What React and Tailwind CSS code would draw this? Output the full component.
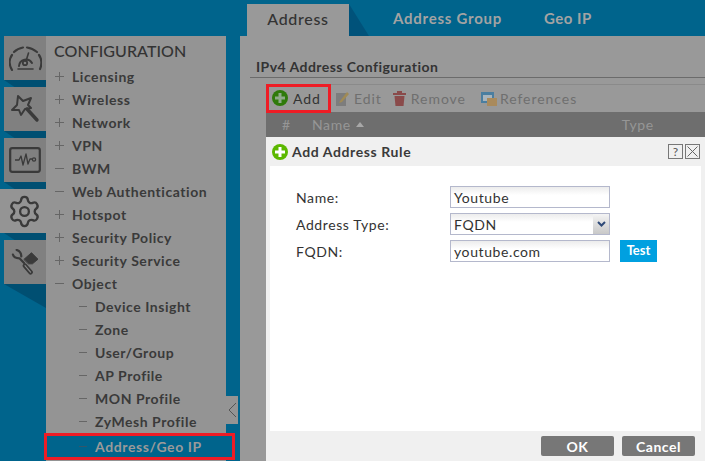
import { Settings } from "lucide-react";

const font = "font-['Lato','Liberation_Sans',sans-serif]";

const menu = [
  ["+", "Licensing"],
  ["+", "Wireless"],
  ["+", "Network"],
  ["+", "VPN"],
  ["-", "BWM"],
  ["-", "Web Authentication"],
  ["+", "Hotspot"],
  ["+", "Security Policy"],
  ["+", "Security Service"],
  ["-", "Object"],
];

const subMenu = ["Device Insight", "Zone", "User/Group", "AP Profile", "MON Profile", "ZyMesh Profile"];

function Gauge() {
  return (
    <svg width="33" height="25" viewBox="0 0 33 25" fill="none" stroke="#3a3a3a" strokeWidth="2.2" strokeLinecap="round">
      <path d="M3 24 C0 19 0 13 3 9" />
      <path d="M5 6 C8 3 11 2 14 1.5" />
      <path d="M18 1.5 C22 2 25 3.500 28 6" />
      <path d="M30 9 C33 13 33 19 31 23" />
      <path d="M10 20 A7 7 0 0 1 23 17" strokeWidth="2" />
      <circle cx="16" cy="17" r="2.2" strokeWidth="1.8" />
      <path d="M17 15 L19.500 7" strokeWidth="1.6" />
      <path d="M9 23 h15" strokeWidth="1.6" />
    </svg>
  );
}

function Wand() {
  return (
    <svg width="30" height="30" viewBox="0 0 30 30" fill="none" stroke="#3a3a3a" strokeLinejoin="round" strokeLinecap="round">
      <path d="M8 2 L13 7 L21 4 L18 11 L21 14 L15 15 L11 21 L9 16 L2 16 L7 11 Z" strokeWidth="2" />
      <path d="M17 15 L27 26" strokeWidth="3.4" />
    </svg>
  );
}

function Monitor() {
  return (
    <svg width="32" height="26" viewBox="0 0 32 26" fill="none" stroke="#3a3a3a" strokeLinejoin="round">
      <rect x="1.2" y="1.2" width="29.6" height="23.6" rx="2" strokeWidth="2.2" />
      <path d="M6 13 H10 L12 9 L14 18 L17 7 L19 17 L21 12 H23" strokeWidth="1.3" />
      <circle cx="25" cy="12.5" r="1.6" strokeWidth="1.3" />
    </svg>
  );
}

function Tools() {
  return (
    <svg width="28" height="26" viewBox="0 0 30 28" fill="none" stroke="#3a3a3a" strokeLinecap="round" strokeLinejoin="round">
      <path d="M2 6 C3 10 6 10 9 10 L14 15" strokeWidth="2.4" />
      <path d="M6 1 C9 2 11 4 11 8" strokeWidth="2.4" />
      <path d="M14 11 L22 4 L29 11 L23 16 L19 16 Z" fill="#3a3a3a" strokeWidth="1" />
      <path d="M15 18 L21 25" strokeWidth="5" />
      <path d="M15 18 L21 25" strokeWidth="1.2" stroke="#8a8a8a" />
    </svg>
  );
}

function PlusIcon({ fill, plus }) {
  return (
    <svg width="16" height="16" viewBox="0 0 16 16" className="shrink-0">
      <circle cx="8" cy="8" r="8" fill={fill} />
      <path d="M8 3 V13 M3 8 H13" stroke={plus} strokeWidth="3" />
    </svg>
  );
}

function RailItem({ children, tall }) {
  return (
    <div className="flex flex-col">
      <div className="ml-1 flex h-11 w-[42px] items-center justify-center bg-[#808080]">{children}</div>
      {tall ? (
        <div className="ml-1 h-6 w-[42px] bg-[#004f72] [clip-path:polygon(0_0,100%_0,100%_100%)]"></div>
      ) : (
        <div className="ml-1 h-[7px] w-[42px] bg-[#004f72] [clip-path:polygon(0_0,100%_0,100%_100%,25%_100%)]"></div>
      )}
    </div>
  );
}

function ToolbarButton({ icon, label, className }) {
  return (
    <div className={`flex items-center text-[14px] tracking-[0.95px] text-[#6f6f6f] ${className}`}>
      {icon}
      <span>{label}</span>
    </div>
  );
}

function Field({ label, children }) {
  return (
    <div className="flex h-[22px] items-center">
      <div className="w-[154px] text-[14px] tracking-[0.6px] text-[#333]">{label}</div>
      {children}
    </div>
  );
}

function TextBox({ value }) {
  return (
    <div className="flex h-[22px] w-[160px] items-center border border-[#b4b8cc] bg-gradient-to-b from-[#ececec] to-white to-40% px-[3px] text-[14px] tracking-[0.6px] text-[#333]">
      {value}
    </div>
  );
}

export default function App() {
  return (
    <div className={`relative flex h-[461px] w-[705px] overflow-hidden bg-[#00648c] ${font}`}>
      {/* left icon rail */}
      <div className="flex w-[46px] flex-col pt-9">
        <RailItem><Gauge /></RailItem>
        <RailItem><Wand /></RailItem>
        <RailItem><Monitor /></RailItem>
        <div className="flex h-[44px] w-[46px] items-center justify-center bg-[#949494] pl-[3px]">
          <Settings size={35} color="#3a3a3a" strokeWidth={1.6} />
        </div>
        <div className="ml-1 h-[7px] w-[42px] bg-[#004f72] [clip-path:polygon(0_0,100%_0,100%_100%,25%_100%)]"></div>
        <RailItem tall><Tools /></RailItem>
      </div>

      {/* menu */}
      <div className="mt-9 h-[425px] w-[180px] bg-[#949494]">
        <div className="flex h-[29px] items-center pl-2 pt-[1px] text-[16px] font-medium tracking-[0.05px] text-[#333]">CONFIGURATION</div>
        {menu.map(([sign, label]) => (
          <div key={label} className="flex h-[23px] items-center pl-[9px] text-[14px] font-bold tracking-[0.55px] text-[#3a3a3a]">
            <span className="relative mr-[8px] h-[9px] w-[9px]">
              <span className="absolute left-0 top-1 h-px w-[9px] bg-[#666]"></span>
              {sign === "+" && <span className="absolute left-1 top-0 h-[9px] w-px bg-[#666]"></span>}
            </span>
            {label}
          </div>
        ))}
        {subMenu.map((label) => (
          <div key={label} className="flex h-[23px] items-center pl-[33px] text-[14px] font-bold tracking-[0.55px] text-[#3a3a3a]">
            <span className="mr-[8px] h-px w-[8px] bg-[#666]"></span>
            {label}
          </div>
        ))}
        <div className="-ml-[2px] flex h-[27px] w-[191px] items-center border-[3px] border-[#ee1c25] bg-[#00648c] pl-[32px] text-[14px] font-bold tracking-[0.6px] text-[#9a9a9a]">
          <span className="mr-[8px] h-px w-[8px] bg-[#33566a]"></span>
          Address/Geo IP
        </div>
      </div>

      {/* collapse handle */}
      <div className="w-[14px]">
        <div className="mt-[396px] flex h-7 w-3 items-center justify-center bg-[#949494]">
          <svg width="9" height="16" viewBox="0 0 9 16" fill="none" stroke="#555" strokeWidth="1">
            <path d="M8 1 L1 8 L8 15" />
          </svg>
        </div>
      </div>

      {/* content */}
      <div className="flex w-[465px] flex-col">
        <div className="flex h-9 items-end pl-[7px]">
          <div className="flex h-8 w-[102px] items-center justify-center bg-[#999] pb-[2px] text-[16px] font-medium tracking-[0.7px] text-[#333]">Address</div>
          <div className="h-8 w-5 bg-[#00527a] [clip-path:polygon(0_0,100%_100%,0_100%)]"></div>
          <div className="ml-[24px] pb-[7px] text-[15px] font-bold tracking-[0.75px] text-[#a3a3a3]">Address Group</div>
          <div className="ml-[42px] pb-[7px] text-[15px] font-bold tracking-[0.5px] text-[#a3a3a3]">Geo IP</div>
        </div>
        <div className="flex-1 bg-[#999]">
          <div className="ml-[10px] mt-[21px] h-[21px] border-b border-[#6b6b6b] pl-[6px] text-[14px] font-bold leading-[20px] tracking-[0.45px] text-[#333]">
            IPv4 Address Configuration
          </div>
          <div className="ml-[26px] mt-[6px] h-[28px] border-t border-[#8a8a8a]">
            <div className="flex h-[27px] items-center">
              <div className="-mt-[1px] flex h-[29px] w-[65px] items-center gap-[5px] border-[3px] border-[#ee1c25] pl-[3px] text-[14px] tracking-[0.9px] text-[#333]">
                <PlusIcon fill="#2f7a0a" plus="#8fa98a" />
                <span>Add</span>
              </div>
              <div className="ml-[5px] flex items-center">
                <ToolbarButton
                  className="mr-[11px] gap-[5px]"
                  icon={
                    <svg width="13" height="15" viewBox="0 0 13 15">
                      <rect x="0" y="2" width="10" height="13" fill="#7d7d7d" />
                      <path d="M4 10 L11 1 L13 3 L6 11 L3 12 Z" fill="#a08a55" />
                    </svg>
                  }
                  label="Edit"
                />
                <ToolbarButton
                  className="mr-[15px] gap-[5px]"
                  icon={
                    <svg width="13" height="15" viewBox="0 0 13 15" fill="#8a4a4a">
                      <rect x="0" y="2" width="13" height="2" />
                      <rect x="4" y="0" width="5" height="2" />
                      <path d="M1.5 5 H11.5 L10.5 15 H2.5 Z" />
                    </svg>
                  }
                  label="Remove"
                />
                <ToolbarButton
                  className="gap-[3px]"
                  icon={
                    <svg width="16" height="14" viewBox="0 0 16 14">
                      <rect x="0" y="0" width="13" height="11" fill="#4a7ea0" />
                      <rect x="2" y="3" width="9" height="6" fill="#a8b4bc" />
                      <rect x="6" y="6" width="10" height="8" fill="#a98a5c" />
                    </svg>
                  }
                  label="References"
                />
              </div>
            </div>
          </div>
          <div className="ml-[26px] flex h-[25px] items-center bg-[#6e6e6e] pl-4 text-[14px] tracking-[0.6px] text-[#969696]">
            <span className="w-[30px]">#</span>
            <span>Name</span>
            <span className="ml-[5px] h-0 w-0 border-x-[4px] border-b-[5px] border-x-transparent border-b-[#a8a8a8]"></span>
            <span className="ml-[258px]">Type</span>
          </div>
        </div>
      </div>

      {/* dialog */}
      <div className="absolute left-[266px] top-[137px] flex h-[324px] w-[439px] flex-col bg-[#f0f0f0] px-1">
        <div className="flex h-[29px] items-center">
          <div className="ml-[2px]">
            <PlusIcon fill="#5cb800" plus="#ffffff" />
          </div>
          <span className="ml-[4px] text-[14px] font-bold tracking-[0.6px] text-[#3a3a3a]">Add Address Rule</span>
          <div className="ml-auto mr-[1px] flex gap-[2px]">
            <div className="flex h-[15px] w-[15px] items-center justify-center border border-[#777] text-[12px] leading-none text-[#555]">?</div>
            <div className="flex h-[15px] w-[15px] items-center justify-center border border-[#777]">
              <svg width="11" height="11" viewBox="0 0 11 11" stroke="#666" strokeWidth="1">
                <path d="M0.5 0.5 L10.5 10.5 M10.5 0.5 L0.5 10.5" />
              </svg>
            </div>
          </div>
        </div>
        <div className="flex h-[265px] flex-col gap-[5px] bg-white pl-[26px] pt-5">
          <Field label="Name:">
            <TextBox value="Youtube" />
          </Field>
          <Field label="Address Type:">
            <div className="relative">
              <TextBox value="FQDN" />
              <div className="absolute right-[1px] top-[1px] flex h-5 w-4 items-center justify-center bg-gradient-to-b from-[#f4f4f4] to-[#c8c8c8]">
                <svg width="9" height="6" viewBox="0 0 9 6" fill="none" stroke="#2f4a78" strokeWidth="2">
                  <path d="M1 1 L4.5 4.5 L8 1" />
                </svg>
              </div>
            </div>
          </Field>
          <Field label="FQDN:">
            <TextBox value="youtube.com" />
            <div className="ml-[10px] flex h-[22px] w-[37px] items-center justify-center bg-[#00a0e0] text-[13px] font-bold text-white">Test</div>
          </Field>
        </div>
        <div className="flex flex-1 items-center justify-end gap-2 pr-[6px]">
          <div className="flex h-5 w-[73px] items-center justify-center rounded-[2px] bg-[#777] text-[14px] font-bold tracking-[0.5px] text-white">OK</div>
          <div className="flex h-5 w-[73px] items-center justify-center rounded-[2px] bg-[#777] text-[14px] font-bold tracking-[0.5px] text-white">Cancel</div>
        </div>
      </div>
    </div>
  );
}
